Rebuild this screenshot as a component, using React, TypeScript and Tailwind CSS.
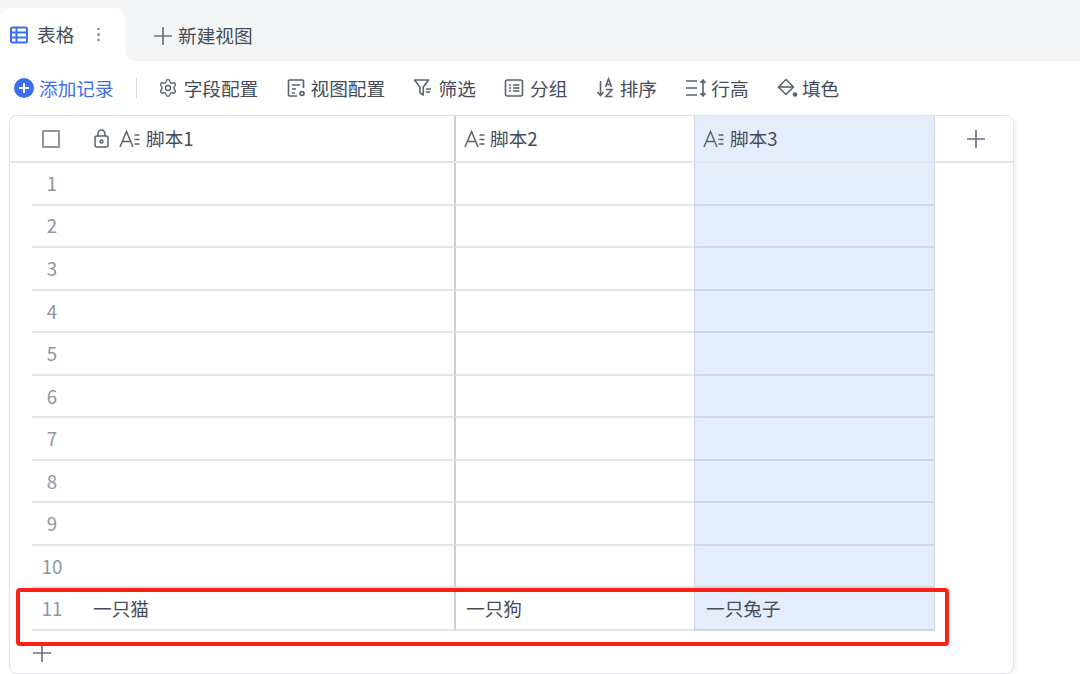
import React from "react";
import { Settings } from "lucide-react";

const S = ({ w = 20, h = 20, children, c = "#5b6270", sw = 1.6 }: { w?: number; h?: number; children: React.ReactNode; c?: string; sw?: number }) => (
  <svg width={w} height={h} viewBox={`0 0 ${w} ${h}`} fill="none" stroke={c} strokeWidth={sw} className="shrink-0">
    {children}
  </svg>
);

const TableIcon = () => (
  <S w={18} h={18} c="#3b6ef0" sw={2}>
    <rect x="1" y="1.500" width="16" height="15" rx="1.500" />
    <path d="M1 6.500h16M1 11.500h16M6.500 1.500v15" />
  </S>
);
const Plus = ({ s = 18, c = "#6b7280" }: { s?: number; c?: string }) => (
  <S w={s} h={s} c={c} sw={1.7}>
    <path d={`M${s / 2} 0v${s}M0 ${s / 2}h${s}`} />
  </S>
);
const ViewIcon = () => (
  <S w={20} h={20}>
    <path d="M10 18H2.500a1 1 0 0 1-1-1V3a1 1 0 0 1 1-1h13a1 1 0 0 1 1 1v7" />
    <path d="M5 7h8M5 11h4M5 15h3" />
    <circle cx="15" cy="15.500" r="2.800" fill="#5b6270" stroke="none" />
    <circle cx="15" cy="15.500" r="1" fill="#fff" stroke="none" />
  </S>
);
const FilterIcon = () => (
  <S w={20} h={20}>
    <path d="M1.500 2h14l-5.200 7v8l-3.400-2.200V9z" strokeLinejoin="round" />
    <path d="M13 11h5M13 14h4" />
  </S>
);
const GroupIcon = () => (
  <S w={20} h={20}>
    <rect x="1.500" y="2" width="17" height="16" rx="2" />
    <path d="M5 7h2M9 7h6.500M5 10h2M9 10h6.500M5 13h2M9 13h6.500" />
  </S>
);
const SortIcon = () => (
  <S w={20} h={22}>
    <path d="M4.500 4v14M1.500 15l3 3.500 3-3.500" />
    <path d="M9.500 10l3-8 3 8M10.500 7.500h4M10 12.500h6l-6 7h6.500" />
  </S>
);
const RowHeight = () => (
  <S w={22} h={20}>
    <path d="M1 3h11M1 10h11M1 17h11" />
    <path d="M18 2.500v15M15.500 5l2.500-3 2.500 3M15.500 15l2.500 3 2.500-3" />
  </S>
);
const FillIcon = () => (
  <S w={21} h={20}>
    <path d="M9 1.500l7.500 7.500-7.500 7.500L1.500 9z" strokeLinejoin="round" />
    <path d="M1.500 9h15" />
    <circle cx="18" cy="16.500" r="2.300" fill="#5b6270" stroke="none" />
  </S>
);
const Lock = () => (
  <S w={15} h={19} sw={1.5}>
    <rect x="1" y="7" width="13" height="11" rx="2" />
    <path d="M4 7V4.500a3.500 3.500 0 0 1 7 0V7" />
    <circle cx="7.500" cy="12.500" r="1.500" />
  </S>
);
const TextIcon = () => (
  <S w={21} h={18} sw={1.5}>
    <path d="M1 17L7.500 1.500 14 17M3.500 11.500h8" />
    <path d="M15.500 5h5M15.500 9.500h5M15.500 14h5" />
  </S>
);

const tools: { icon: React.ReactNode; label: string; iw: string }[] = [
  { icon: <Settings size={20} color="#5b6270" strokeWidth={1.6} />, label: "字段配置", iw: "w-[26px]" },
  { icon: <ViewIcon />, label: "视图配置", iw: "w-[24px]" },
  { icon: <FilterIcon />, label: "筛选", iw: "w-[25px]" },
  { icon: <GroupIcon />, label: "分组", iw: "w-[26px]" },
  { icon: <SortIcon />, label: "排序", iw: "w-[24px]" },
  { icon: <RowHeight />, label: "行高", iw: "w-[26px]" },
  { icon: <FillIcon />, label: "填色", iw: "w-[25px]" },
];

const rows: [string, string, string][] = [
  ...Array.from({ length: 10 }, () => ["", "", ""] as [string, string, string]),
  ["一只猫", "一只狗", "一只兔子"],
];

export default function App() {
  return (
    <div className="relative w-[1080px] h-[674px] overflow-hidden bg-white text-[18.67px] leading-none text-[#454c59] font-['Noto_Sans_CJK_SC','Noto_Sans',sans-serif]">
      {/* Tab bar */}
      <div className="flex h-[61px]">
        <div className="w-[125px] bg-[#f4f5f7] pt-2">
          <div className="flex h-[53px] items-center rounded-t-[10px] bg-white pl-[10px]">
            <TableIcon />
            <span className="ml-[9px]">表格</span>
            <span className="ml-[23px] flex flex-col gap-[3px]">
              <i className="block h-[2.500px] w-[2.500px] rounded-full bg-[#8b909a]" />
              <i className="block h-[2.500px] w-[2.500px] rounded-full bg-[#8b909a]" />
              <i className="block h-[2.500px] w-[2.500px] rounded-full bg-[#8b909a]" />
            </span>
          </div>
        </div>
        <div className="flex-1 bg-white">
          <div className="flex h-full items-center rounded-bl-[10px] bg-[#f4f5f7] pl-[29px] pt-[10px]">
            <Plus />
            <span className="ml-[6px]">新建视图</span>
          </div>
        </div>
      </div>

      {/* Toolbar */}
      <div className="flex h-[54px] items-center pl-[14px]">
        <span className="flex h-[20px] w-[20px] items-center justify-center rounded-full bg-[#3b6ef0]">
          <svg width="10" height="10" viewBox="0 0 10 10" stroke="#fff" strokeWidth="2">
            <path d="M5 0v10M0 5h10" />
          </svg>
        </span>
        <span className="ml-[5px] text-[#3f6fe8]">添加记录</span>
        <span className="ml-[22px] mr-[21px] h-[20px] w-[1px] bg-[#d5d8dd]" />
        <div className="flex items-center gap-[28.300px]">
          {tools.map((t) => (
            <div key={t.label} className="flex items-center">
              <span className={`${t.iw} flex`}>{t.icon}</span>
              <span>{t.label}</span>
            </div>
          ))}
        </div>
      </div>

      {/* Table */}
      <div className="ml-[9px] flex h-[559px] w-[1005px] flex-col rounded-[8px] border border-[#e0e2e6] shadow-[2px_1px_4px_rgba(0,0,0,0.06)]">
        <div className="flex h-[47px] shrink-0 border-b-2 border-[#e3e5e8]">
          <div className="flex w-[446px] items-center border-r-2 border-[#ccd0d6]">
            <span className="ml-[32px] h-[18px] w-[18px] rounded-[1px] border-2 border-[#8f949d]" />
            <span className="ml-[34px] flex"><Lock /></span>
            <span className="ml-[10px] flex"><TextIcon /></span>
            <span className="ml-[6px]">脚本1</span>
          </div>
          <div className="flex w-[238px] items-center pl-[8px]">
            <TextIcon />
            <span className="ml-[5px]">脚本2</span>
          </div>
          <div className="flex w-[241px] items-center border-x border-[#ccd6e8] bg-[#e5ecfc] pl-[8px]">
            <TextIcon />
            <span className="ml-[6px]">脚本3</span>
          </div>
          <div className="flex flex-1 items-center justify-center pl-[4px]">
            <Plus />
          </div>
        </div>

        {rows.map((r, i) => (
          <div key={i} className="flex h-[42.550px] shrink-0 pl-[22px]">
            <div className="flex w-[50px] items-center justify-center border-b-2 border-[#e3e5e8] pr-[10px] text-[#8f95a3]">
              {i + 1}
            </div>
            <div className="flex w-[374px] items-center border-b-2 border-r-2 border-[#e3e5e8] border-r-[#ccd0d6] pl-[11px]">
              {r[0]}
            </div>
            <div className="flex w-[238px] items-center border-b-2 border-[#e3e5e8] pl-[10px]">{r[1]}</div>
            <div className="flex w-[241px] items-center border-x border-b-2 border-[#ccd6e8] bg-[#e5ecfc] pl-[11px]">{r[2]}</div>
          </div>
        ))}

        <div className="pl-[23px] pt-[13px]">
          <Plus />
        </div>
      </div>

      {/* Red annotation */}
      <div className="absolute left-[16px] top-[588px] h-[58px] w-[933px] rounded-[4px] border-[4px] border-[#ff2015]" />
    </div>
  );
}
